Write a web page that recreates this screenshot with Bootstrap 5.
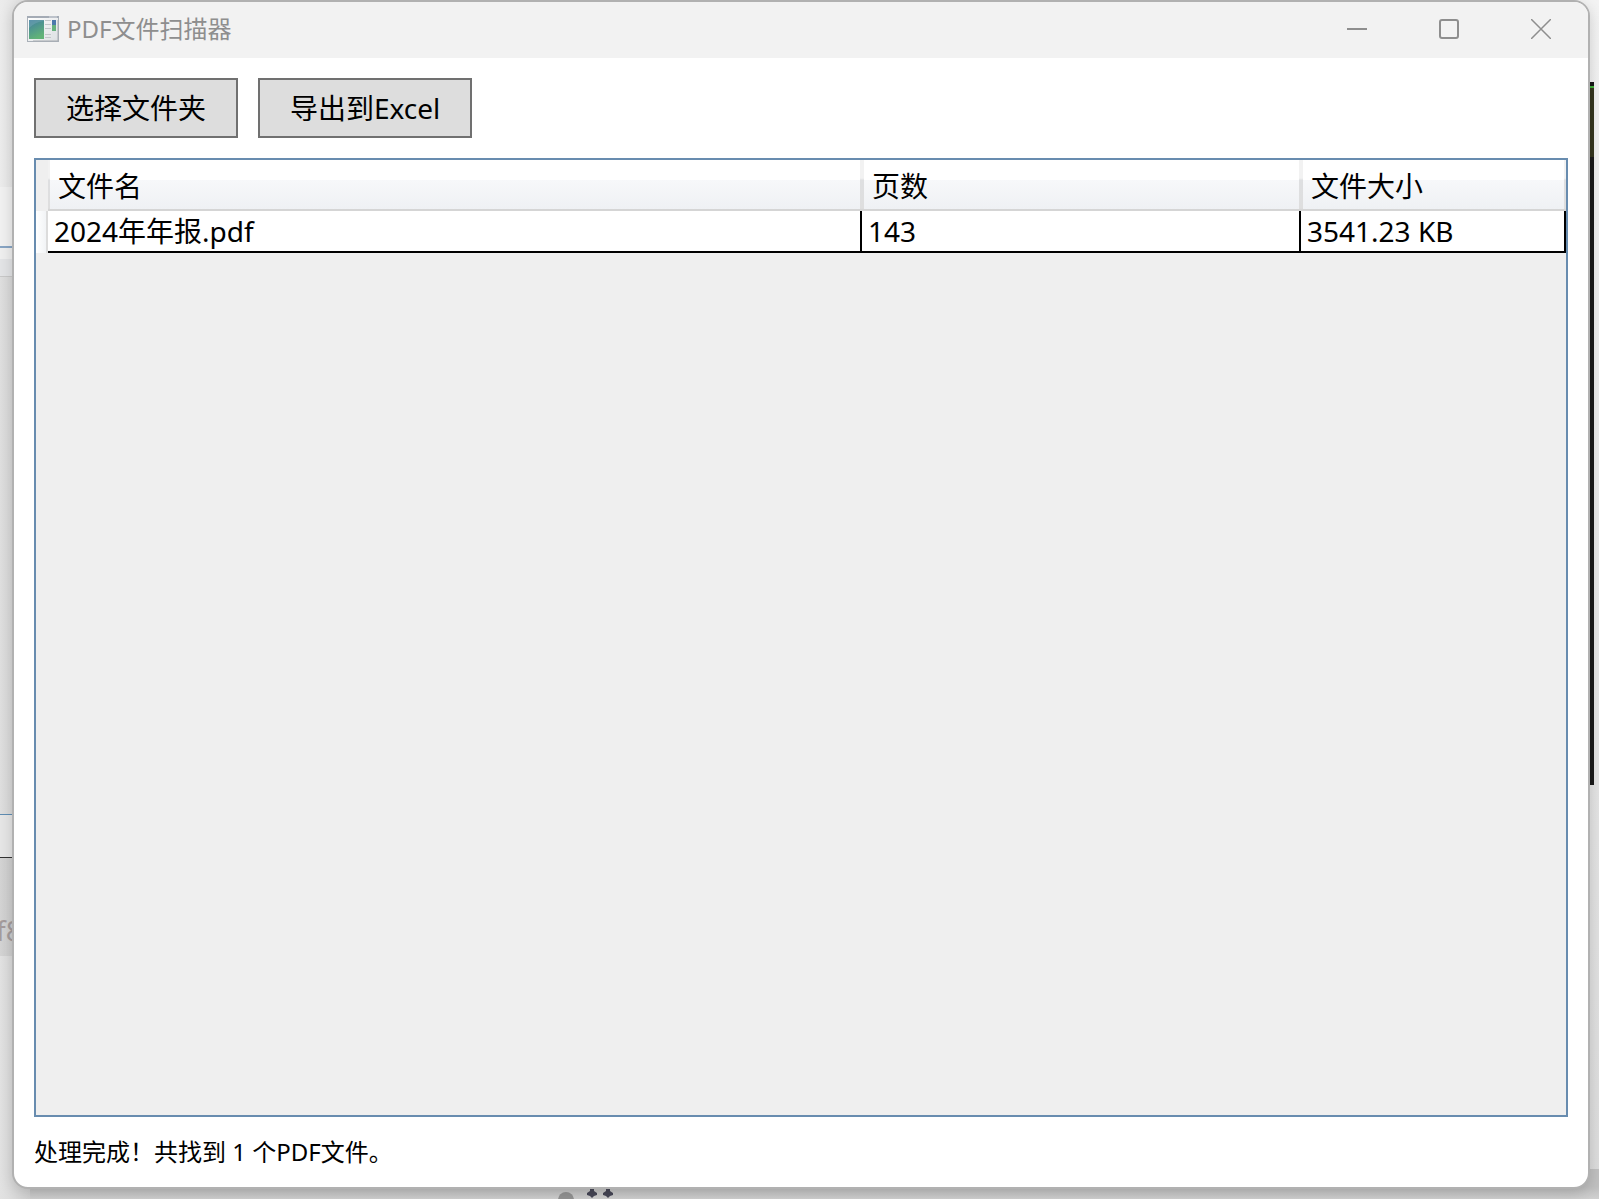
<!DOCTYPE html>
<html lang="zh-CN">
<head>
<meta charset="utf-8">
<meta name="viewport" content="width=device-width, initial-scale=1">
<title>PDF文件扫描器</title>
<link href="https://cdn.jsdelivr.net/npm/bootstrap@5.3.0/dist/css/bootstrap.min.css" rel="stylesheet">
<style>
body{font-family:"Noto Sans","Noto Sans CJK SC",sans-serif;font-size:28px;line-height:40px;color:#000;background:#ececec}
.desktop{padding:0 9px 10px 12px;background:linear-gradient(#f3f3f3,#dcdcdc)}
/* windows showing behind the main one */
.behind-left{position:absolute;left:0;top:0;bottom:0;width:30px;background:#dedede}
.behind-left div{flex:none}
.bl-a{height:187px;background:linear-gradient(90deg,#ececec,#e0e0e0)}
.bl-b{height:61px;background:#f1f1f1;border-bottom:2px solid #88a5c4}
.bl-c{height:29px;background:linear-gradient(#efefef 40%,#e3e4e6 40%);border-bottom:1px solid #c8c8c8}
.bl-d{height:538px;background:linear-gradient(90deg,#dfdfdf,#cfcfcf);border-bottom:1px solid #5f8db3}
.bl-e{height:43px;background:#e6e6e6;border-bottom:1px solid #333}
.bl-f{height:98px;background:linear-gradient(90deg,#d4d4d4,#c6c6c6);color:#a59c9c;padding-top:52px;text-indent:-4px}
.bl-g{background:linear-gradient(90deg,#e2e2e2,#d2d2d2)}
.behind-right{position:absolute;right:5px;top:82px;width:8px;height:703px;background:linear-gradient(#161616 4px,#3fae38 4px,#3fae38 6px,#35361f 6px,#35361f 75px,#1b1b1b 75px)}
.behind-bottom{position:absolute;left:0;right:0;bottom:0;height:30px;background:linear-gradient(#c0c0c0 60%,#d0d0d0)}
.behind-bottom svg{position:absolute;left:555px;bottom:0}
.app-window{position:relative;background:#fff;border:2px solid #b1b1b1;border-radius:16px;box-shadow:0 4px 14px rgba(0,0,0,.16)}
.title-bar{height:56px;background:#f2f2f2;border-radius:14px 14px 0 0;color:#8e8e8e;padding:0 1px 2px 13px}
.title-bar h1{font-size:24px;line-height:40px;font-weight:400}
.title-bar button{width:92px;height:54px;border:0;background:none;color:#8e8e8e;padding:0}
.content-area{padding:20px 20px 18px}
.tool-row{gap:20px}
.tool-btn{height:60px;padding:0 30px;border:2px solid #707070;border-radius:0;background:#ddd;color:#000;font-size:28px;line-height:40px}
.tool-btn:hover{background:#bee6fd;border-color:#3c7fb1}
.grid-box{border:2px solid #688caf;background:#efefef;margin:20px 0 18px}
.file-grid{width:100%;table-layout:fixed;border-collapse:separate;border-spacing:0}
.file-grid th{height:51px;padding:2px 8px 0;font-weight:400;background:linear-gradient(#fff 40%,#f7f8fa 40%,#eff1f4);border-style:solid;border-width:0 2px 2px;border-color:#d5d5d5;border-image:linear-gradient(#f2f2f2 38%,#dedfe1 42%,#dedede 95%,#d5d5d5 96%) 2}
.file-grid td{height:42px;padding:0 6px;background:#fff;border-right:2px solid #000;border-bottom:2px solid #000}
.file-grid .corner-cell{background:#efefef;border:0;padding:0}
.file-grid .row-head{border:0;padding:0;background:linear-gradient(90deg,#fff,#f2f4f6 80%,#dcdcdc 80%)}
.col-mark{width:12px}.col-pages{width:439px}.col-size{width:265px}
.status-line{font-size:24px;line-height:34px}
</style>
<script src="https://cdn.jsdelivr.net/npm/bootstrap@5.3.0/dist/js/bootstrap.bundle.min.js"></script>
</head>
<body>
<div class="desktop position-relative vh-100 d-flex overflow-hidden">
  <div class="behind-bottom">
    <svg width="60" height="10" viewBox="0 0 60 10" aria-hidden="true"><circle cx="11" cy="11" r="8" fill="#939393"/><path d="M35 0h4v2l3 2v2l-3 1-2 2-2-2-3-1V4l3-2zM51 0h4v2l3 2v2l-3 1-2 2-2-2-3-1V4l3-2z" fill="#464656"/></svg>
  </div>
  <div class="behind-left d-flex flex-column">
    <div class="bl-a"></div><div class="bl-b"></div><div class="bl-c"></div><div class="bl-d"></div><div class="bl-e"></div><div class="bl-f">f8</div><div class="bl-g flex-fill"></div>
  </div>
  <div class="behind-right"></div>

  <main class="app-window flex-fill d-flex flex-column">
    <header class="title-bar d-flex align-items-center">
      <svg class="me-2" width="32" height="26" viewBox="0 0 32 26" aria-hidden="true">
        <defs><linearGradient id="pane" x1="0" y1="0" x2=".4" y2="1"><stop offset="0" stop-color="#417ea2"/><stop offset="1" stop-color="#61b377"/></linearGradient>
        <linearGradient id="frame" x1="0" y1="0" x2="1" y2="1"><stop offset="0" stop-color="#fff"/><stop offset="1" stop-color="#dcdfe2"/></linearGradient></defs>
        <rect x=".5" y=".5" width="31" height="25" fill="url(#frame)" stroke="#a9b0b8"/>
        <path d="M0 1h32" stroke="#a4abb5" stroke-width="2"/><path d="M22 1h8" stroke="#d5d9df"/>
        <rect x="2" y="4" width="15" height="19" fill="url(#pane)"/>
        <path d="M2 12q6-6 15-7v-1H2z" fill="#7ba9b8" opacity=".45"/>
        <path d="M18 4.5h6M18 8.500h6M18 12.500h6M18 18.500h6M18 21.500h6" stroke="#c3c7ca"/>
        <rect x="25" y="4" width="4" height="18" fill="#e2e5e7"/><rect x="25" y="4" width="4" height="5" fill="#4b78ab"/><rect x="25" y="9" width="4" height="6" fill="#66b27e"/>
        <path d="M31 4v21H6" fill="none" stroke="#a8acb1"/>
      </svg>
      <h1 class="m-0 flex-fill">PDF文件扫描器</h1>
      <button type="button" aria-label="最小化"><svg class="d-block mx-auto" width="20" height="20" viewBox="0 0 20 20"><path d="M0 10h20" stroke="currentColor" stroke-width="2"/></svg></button>
      <button type="button" aria-label="最大化"><svg class="d-block mx-auto" width="20" height="20" viewBox="0 0 20 20"><rect x="1" y="1" width="18" height="18" rx="2" fill="none" stroke="currentColor" stroke-width="2"/></svg></button>
      <button type="button" aria-label="关闭"><svg class="d-block mx-auto" width="20" height="20" viewBox="0 0 20 20"><path d="M0 0l20 20M20 0L0 20" stroke="currentColor" stroke-width="1.5"/></svg></button>
    </header>
    <div class="content-area flex-fill d-flex flex-column">
      <div class="tool-row d-flex">
        <button type="button" class="btn tool-btn">选择文件夹</button>
        <button type="button" class="btn tool-btn">导出到Excel</button>
      </div>
      <div class="grid-box flex-fill">
        <table class="file-grid">
          <colgroup><col class="col-mark"><col><col class="col-pages"><col class="col-size"></colgroup>
          <thead><tr><td class="corner-cell"></td><th scope="col">文件名</th><th scope="col">页数</th><th scope="col">文件大小</th></tr></thead>
          <tbody><tr><td class="row-head"></td><td>2024年年报.pdf</td><td>143</td><td>3541.23 KB</td></tr></tbody>
        </table>
      </div>
      <div class="status-line" role="status">处理完成！共找到 1 个PDF文件。</div>
    </div>
  </main>
</div>
</body>
</html>
